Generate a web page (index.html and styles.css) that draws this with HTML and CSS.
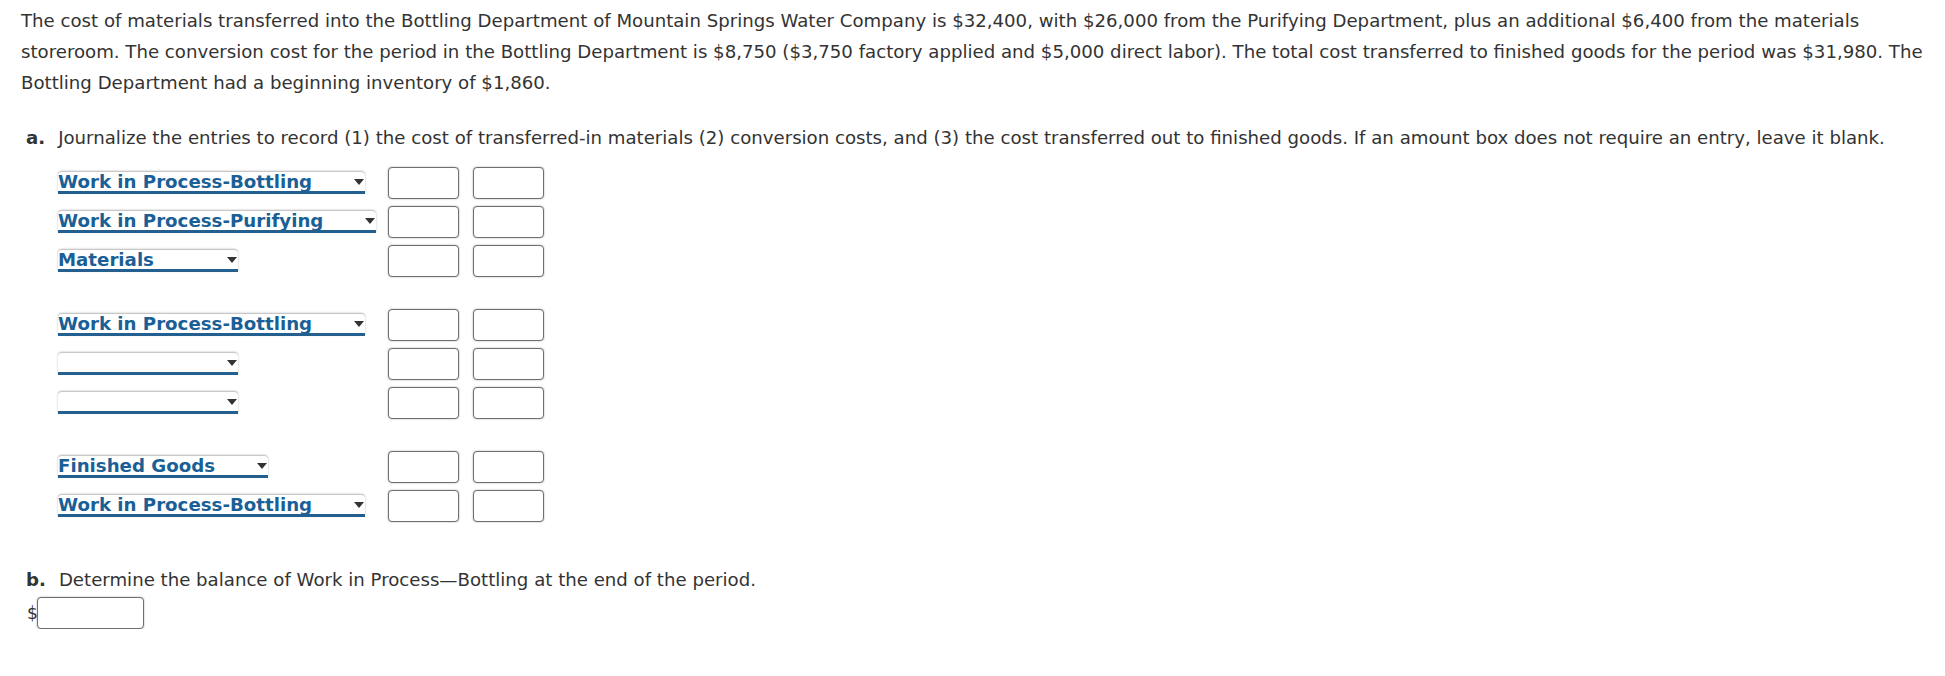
FILE: index.html
```html
<!DOCTYPE html>
<html lang="en">
<head>
    <meta charset="UTF-8">
    <meta name="viewport" content="width=device-width, initial-scale=1.0">
    <title>Bottling Department</title>
    <link rel="stylesheet" href="styles.css">
</head>
<body>
    <div class="question">
        <p class="stem">The cost of materials transferred into the Bottling Department of Mountain Springs Water Company is $32,400, with $26,000 from the Purifying Department, plus an additional $6,400 from the materials storeroom. The conversion cost for the period in the Bottling Department is $8,750 ($3,750 factory applied and $5,000 direct labor). The total cost transferred to finished goods for the period was $31,980. The Bottling Department had a beginning inventory of $1,860.</p>

        <p class="part"><b>a.</b>Journalize the entries to record (1) the cost of transferred-in materials (2) conversion costs, and (3) the cost transferred out to finished goods. If an amount box does not require an entry, leave it blank.</p>

        <div class="journal">
            <div class="entry">
                <div class="select"><span>Work in Process-Bottling</span><i class="arrow"></i></div>
                <input class="amt" type="text"><input class="amt" type="text">
                <div class="select"><span>Work in Process-Purifying</span><i class="arrow"></i></div>
                <input class="amt" type="text"><input class="amt" type="text">
                <div class="select"><span>Materials</span><i class="arrow"></i></div>
                <input class="amt" type="text"><input class="amt" type="text">
            </div>
            <div class="entry">
                <div class="select"><span>Work in Process-Bottling</span><i class="arrow"></i></div>
                <input class="amt" type="text"><input class="amt" type="text">
                <div class="select"><span></span><i class="arrow"></i></div>
                <input class="amt" type="text"><input class="amt" type="text">
                <div class="select"><span></span><i class="arrow"></i></div>
                <input class="amt" type="text"><input class="amt" type="text">
            </div>
            <div class="entry">
                <div class="select"><span>Finished Goods</span><i class="arrow"></i></div>
                <input class="amt" type="text"><input class="amt" type="text">
                <div class="select"><span>Work in Process-Bottling</span><i class="arrow"></i></div>
                <input class="amt" type="text"><input class="amt" type="text">
            </div>
        </div>

        <p class="part part-b"><b>b.</b>Determine the balance of Work in Process—Bottling at the end of the period.</p>
        <div class="balance">
            <span class="dollar">$</span><input class="amt wide" type="text">
        </div>
    </div>
</body>
</html>
```

FILE: styles.css
```css
* { margin: 0; padding: 0; box-sizing: border-box; }
body { background: #fff; color: #333; font-family: "DejaVu Sans", Verdana, sans-serif; font-size: 18.15px; }

.question { padding: 5px 6px 0 21px; }
.stem { line-height: 31px; }

.part { margin-top: 24px; padding-left: 5px; line-height: 31px; }
.part b { margin-right: 13px; }
.part-b { margin-top: 42px; }

.journal { margin-top: 14px; padding-left: 37px; }
.entry { 
    display: grid; 
    grid-template-columns: 316px 71px 71px; 
    grid-auto-rows: 32px; 
    column-gap: 14px; 
    row-gap: 7px; 
    align-items: center; 
}
.entry + .entry { margin-top: 32px; }

.select { 
    justify-self: start;
    display: flex; 
    align-items: flex-start; 
    min-width: 180px; 
    height: 22px; 
    padding-right: 1px;
    background: #fff; 
    border-bottom: 3px solid #23608f; 
    border-radius: 4px 4px 0 0; 
    box-shadow: 0 -1px 2px rgba(0, 0, 0, 0.3); 
    color: #1a5f96; 
    font-size: 18.2px;
    font-weight: bold; 
    line-height: 20px; 
    overflow: hidden; 
}
.select span { padding-right: 42px; white-space: nowrap; }
.arrow { 
    margin-left: auto; 
    margin-top: 7px; 
    border-left: 5px solid transparent; 
    border-right: 5px solid transparent; 
    border-top: 6px solid #333; 
}

.amt { 
    width: 71px; 
    height: 32px; 
    border: 1px solid #6f6f6f; 
    border-radius: 4px; 
    box-shadow: 0 0 2px rgba(0, 0, 0, 0.35); 
    background: #fff; 
}
.amt.wide { width: 107px; }

.balance { display: flex; align-items: center; margin-top: 2px; padding-left: 6px; }
.dollar { width: 10px; font-size: 17px; }
```
